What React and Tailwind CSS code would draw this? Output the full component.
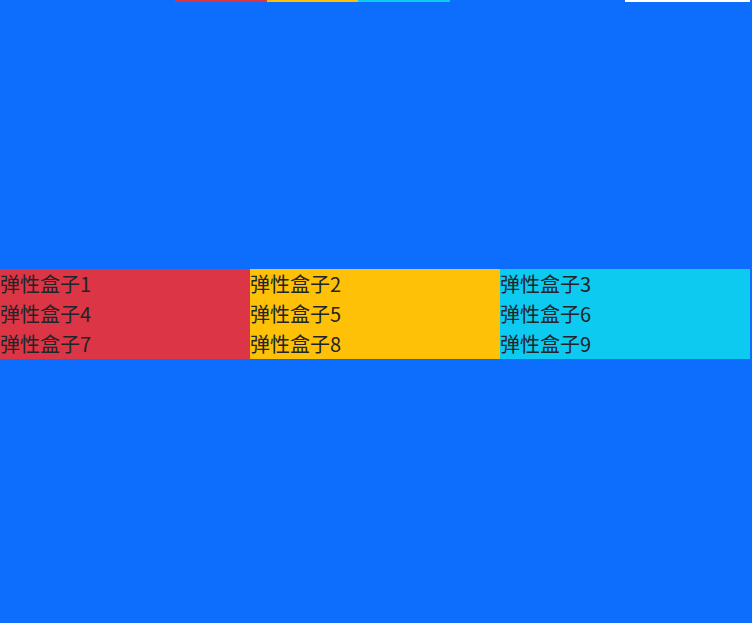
export default function App() {
  const cols = [
    { bg: "bg-[#dc3545]", items: ["弹性盒子1", "弹性盒子4", "弹性盒子7"] },
    { bg: "bg-[#ffc107]", items: ["弹性盒子2", "弹性盒子5", "弹性盒子8"] },
    { bg: "bg-[#0dcaf0]", items: ["弹性盒子3", "弹性盒子6", "弹性盒子9"] },
  ];
  return (
    <div
      className="w-full h-[623px] bg-[#0d6efd] flex flex-col text-[#212529]"
      style={{ fontFamily: '"Noto Sans CJK SC", "Noto Sans", sans-serif' }}
    >
      <div className="flex h-[2px] shrink-0">
        <div className="w-[175px]" />
        <div className="w-[92px] bg-[#dc3545]" />
        <div className="w-[91px] bg-[#ffc107]" />
        <div className="w-[92px] bg-[#0dcaf0]" />
        <div className="w-[175px]" />
        <div className="w-[125px] bg-white" />
      </div>
      <div className="mt-[267px] flex">
        {cols.map((c, i) => (
          <div key={i} className={`w-[250px] ${c.bg} flex flex-col`}>
            {c.items.map((t) => (
              <div key={t} className="h-[30px] text-[20px] leading-[30px]">
                {t}
              </div>
            ))}
          </div>
        ))}
      </div>
    </div>
  );
}
